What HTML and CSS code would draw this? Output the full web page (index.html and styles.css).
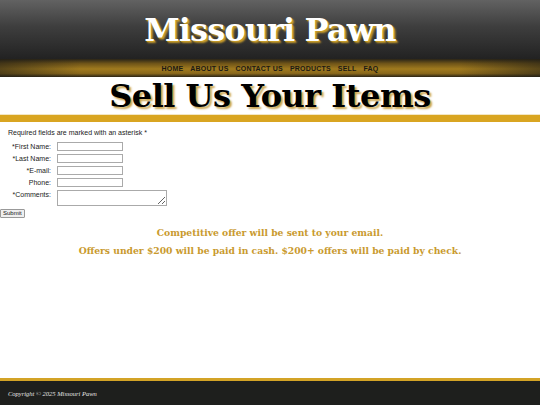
FILE: index.html
```html
<!DOCTYPE html>
<html>
<head>
<meta charset="utf-8">
<link rel="stylesheet" href="styles.css">
</head>
<body>
<header class="masthead">
  <div class="brand">Missouri Pawn</div>
</header>
<nav class="nav">
  <a href="#">HOME</a>
  <a href="#">ABOUT US</a>
  <a href="#">CONTACT US</a>
  <a href="#">PRODUCTS</a>
  <a href="#">SELL</a>
  <a href="#">FAQ</a>
</nav>
<div class="page-title"><h1>Sell Us Your Items</h1></div>
<div class="gold-bar"></div>
<main class="content">
  <p class="note">Required fields are marked with an asterisk *</p>
  <form class="form">
    <div class="row"><label class="lbl">*First Name:</label><input class="field" type="text"></div>
    <div class="row"><label class="lbl">*Last Name:</label><input class="field" type="text"></div>
    <div class="row"><label class="lbl">*E-mail:</label><input class="field" type="text"></div>
    <div class="row"><label class="lbl">Phone:</label><input class="field" type="text"></div>
    <div class="row"><label class="lbl">*Comments:</label><textarea class="area"></textarea></div>
    <button class="submit" type="button">Submit</button>
  </form>
  <p class="offer">Competitive offer will be sent to your email.</p>
  <p class="offer">Offers under $200 will be paid in cash. $200+ offers will be paid by check.</p>
</main>
<footer class="footer">
  <p class="copy">Copyright © 2025 Missouri Pawn</p>
</footer>
</body>
</html>
```
FILE: styles.css
```css
html, body {
  margin: 0;
  padding: 0;
  background: #fff;
}
body {
  width: 540px;
  height: 405px;
  display: flex;
  flex-direction: column;
  font-family: "Liberation Sans", Arial, sans-serif;
  overflow: hidden;
}
.masthead {
  height: 59px;
  background: linear-gradient(to bottom, #626262 0%, #3e3e3e 45%, #222 100%);
  display: flex;
  justify-content: center;
  align-items: flex-start;
}
.brand {
  font-family: "DejaVu Serif", Georgia, serif;
  font-weight: bold;
  font-size: 32px;
  color: #fff;
  line-height: 1;
  margin-top: 14px;
  letter-spacing: -0.9px;
  text-shadow: 2px 2px 2px #c49a2a, 1px 1px 0 #b88e20;
}
.nav {
  height: 18px;
  display: flex;
  justify-content: center;
  align-items: center;
  gap: 7px;
  background:
    linear-gradient(to right, rgba(30,28,22,0.55) 0%, rgba(30,28,22,0) 15%, rgba(30,28,22,0) 85%, rgba(30,28,22,0.55) 100%),
    linear-gradient(to bottom, #2a2518 0%, #6f5418 25%, #a07a1e 55%, #8a681b 80%, #2a2416 100%);
}
.nav a {
  font-family: "Liberation Sans", Arial, sans-serif;
  font-weight: bold;
  font-size: 7px;
  letter-spacing: 0.2px;
  color: #1c1a14;
  text-decoration: none;
  padding-top: 1px;
}
.page-title {
  height: 37px;
  display: flex;
  justify-content: center;
  align-items: center;
  border-bottom: 1px solid #f3e7c4;
}
.page-title h1 {
  margin: 0;
  font-family: "DejaVu Serif", Georgia, serif;
  font-weight: bold;
  font-size: 32px;
  line-height: 1;
  color: #000;
  letter-spacing: -0.5px;
  text-shadow: 2px 2px 2px #c9a24a;
}
.gold-bar {
  height: 7px;
  background: #d9a521;
}
.content {
  flex: 1;
  padding: 7px 0 0 0;
}
.note {
  margin: 0 0 6px 8px;
  font-size: 7px;
  color: #222;
}
.form {
  display: flex;
  flex-direction: column;
  gap: 3px;
}
.row {
  display: flex;
  align-items: flex-start;
  gap: 6px;
}
.lbl {
  width: 51px;
  text-align: right;
  font-size: 7px;
  color: #222;
  line-height: 9px;
}
.field {
  width: 66px;
  height: 9px;
  box-sizing: border-box;
  border: 1px solid #aaa;
  padding: 0;
  margin: 0;
}
.area {
  width: 110px;
  height: 16px;
  box-sizing: border-box;
  border: 1px solid #aaa;
  padding: 0;
  margin: 0;
  resize: both;
}
.submit {
  align-self: flex-start;
  margin: 0;
  padding: 0 2px;
  height: 9px;
  font-family: "Liberation Sans", Arial, sans-serif;
  font-size: 6px;
  line-height: 7px;
  border: 1px solid #999;
  background: #efefef;
  color: #111;
  border-radius: 1px;
}
.offer {
  margin: 9px 0 0 0;
  text-align: center;
  font-family: "DejaVu Serif", Georgia, serif;
  font-weight: bold;
  font-size: 9.2px;
  color: #c99a2e;
}
.offer + .offer {
  margin-top: 7px;
}
.footer {
  height: 24px;
  border-top: 3px solid #d3a326;
  background: #1e1f1d;
  display: flex;
  align-items: center;
}
.copy {
  margin: 0 0 0 8px;
  font-family: "Liberation Serif", Georgia, serif;
  font-style: italic;
  font-size: 6.5px;
  color: #e6e6e6;
}
```
